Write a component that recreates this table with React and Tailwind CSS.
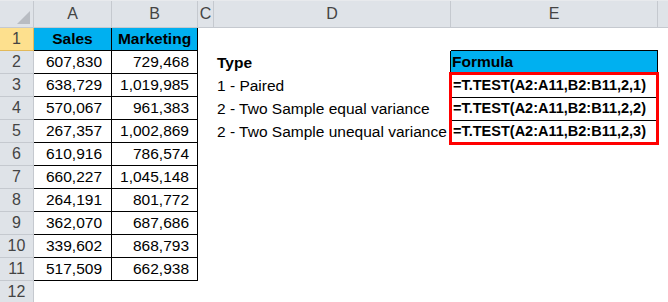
import React from 'react'

const ROWS = [
  ['607,830', '729,468'],
  ['638,729', '1,019,985'],
  ['570,067', '961,383'],
  ['267,357', '1,002,869'],
  ['610,916', '786,574'],
  ['660,227', '1,045,148'],
  ['264,191', '801,772'],
  ['362,070', '687,686'],
  ['339,602', '868,793'],
  ['517,509', '662,938'],
]

const TYPES = ['1 - Paired', '2 - Two Sample equal variance', '2 - Two Sample unequal variance']
const FORMULAS = ['=T.TEST(A2:A11,B2:B11,2,1)', '=T.TEST(A2:A11,B2:B11,2,2)', '=T.TEST(A2:A11,B2:B11,2,3)']

const font = { fontFamily: '"Liberation Sans", Arial, sans-serif' }

function ColHead({ children, className = '' }) {
  return (
    <div className={`flex items-center justify-center bg-[#dfe3e8] border-r border-b border-[#c5c9cf] text-[16px] text-[#444] ${className}`}>
      {children}
    </div>
  )
}

function RowHead({ n, active }) {
  return (
    <div className={`flex items-center justify-center border-r border-b text-[16px] text-[#444] ${active ? 'bg-[#fde08e] border-[#e2b95a]' : 'bg-[#dfe3e8] border-[#c5c9cf]'}`}>
      {n}
    </div>
  )
}

export default function App() {
  return (
    <div className="w-[668px] h-[302px] overflow-hidden bg-white" style={font}>
      <div className="grid grid-cols-[34px_78px_86px_16px_237px_207px_1fr] grid-rows-[27px_23px_repeat(10,23px)_23px] border-t border-[#e8eaed]">
        {/* column headers */}
        <div className="relative bg-[#dfe3e8] border-r border-b border-[#c5c9cf]">
          <svg className="absolute right-[3px] bottom-[3px]" width="13" height="13" viewBox="0 0 13 13">
            <polygon points="13,0 13,13 0,13" fill="#b8bcc2" />
          </svg>
        </div>
        <ColHead>A</ColHead>
        <ColHead>B</ColHead>
        <ColHead>C</ColHead>
        <ColHead>D</ColHead>
        <ColHead>E</ColHead>
        <ColHead className="border-r-0" />

        {/* row 1 */}
        <RowHead n={1} active />
        <div className="flex items-center justify-center bg-[#00b0f0] border-r border-b border-black font-bold text-[15.5px]">Sales</div>
        <div className="flex items-center justify-center bg-[#00b0f0] border-r border-b border-black font-bold text-[15.5px]">Marketing</div>
        <div />
        <div />
        <div className="border-b border-black" />
        <div />

        {ROWS.map((r, i) => {
          const row = i + 2
          return (
            <React.Fragment key={row}>
              <RowHead n={row} />
              <div className="flex items-center justify-end pr-[9px] border-r border-b border-black text-[15.5px]">{r[0]}</div>
              <div className="flex items-center justify-end pr-[8px] border-r border-b border-black text-[15.5px]">{r[1]}</div>
              <div />
              <div className="flex items-center pl-[3px] text-[15.5px]">
                {row === 2 ? <span className="font-bold">Type</span> : row <= 5 ? TYPES[row - 3] : null}
              </div>
              {row === 2 ? (
                <div className="flex items-center pl-[1px] bg-[#00b0f0] border-l border-r border-b border-black -ml-px font-bold text-[15.5px]">Formula</div>
              ) : row === 3 ? (
                <div className="row-span-3 -ml-[2px] -mr-[1px] -mt-[2px] -mb-[2px] border-[3px] border-[#ff0000] flex flex-col font-bold text-[14.5px] bg-white">
                  {FORMULAS.map((f, j) => (
                    <div key={f} className={`flex-1 flex items-center pl-[1px] border-black ${j < 2 ? 'border-b' : ''}`}>{f}</div>
                  ))}
                </div>
              ) : row <= 5 ? null : (
                <div />
              )}
              <div />
            </React.Fragment>
          )
        })}

        <RowHead n={12} />
      </div>
    </div>
  )
}
